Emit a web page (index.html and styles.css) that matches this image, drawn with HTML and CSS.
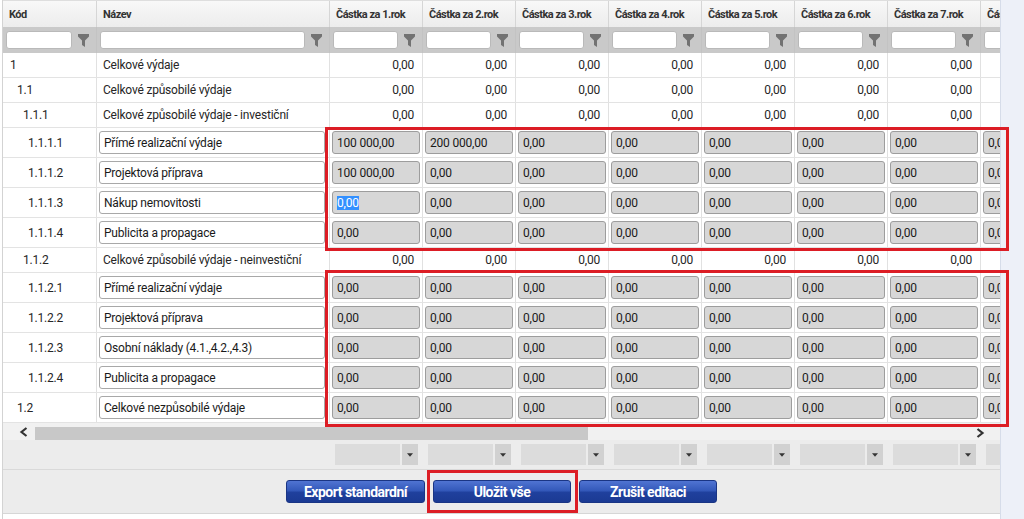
FILE: index.html
```html
<!DOCTYPE html>
<html lang="cs">
<head>
<meta charset="utf-8">
<title>Rozpočet</title>
<link rel="stylesheet" href="styles.css">
</head>
<body>
<svg class="defs" width="0" height="0" aria-hidden="true">
  <defs>
    <symbol id="funnel" viewBox="0 0 11 13"><path d="M0 0H11V2.5L7 6.5V13L4 11V6.5L0 2.5Z"/></symbol>
    <symbol id="tri" viewBox="0 0 7 4"><path d="M0 0H7L3.5 4Z"/></symbol>
  </defs>
</svg>
<div class="page">
  <div class="main">
    <div class="viewport">
      <div class="row hdr">
        <div>Kód</div><div>Název</div>
        <div>Částka za 1.rok</div><div>Částka za 2.rok</div><div>Částka za 3.rok</div><div>Částka za 4.rok</div>
        <div>Částka za 5.rok</div><div>Částka za 6.rok</div><div>Částka za 7.rok</div><div>Částka za 8.rok</div>
      </div>
      <div class="row flt">
        <div><span class="fin"></span><svg class="funnel"><use href="#funnel"/></svg></div>
        <div><span class="fin"></span><svg class="funnel"><use href="#funnel"/></svg></div>
        <div><span class="fin"></span><svg class="funnel"><use href="#funnel"/></svg></div>
        <div><span class="fin"></span><svg class="funnel"><use href="#funnel"/></svg></div>
        <div><span class="fin"></span><svg class="funnel"><use href="#funnel"/></svg></div>
        <div><span class="fin"></span><svg class="funnel"><use href="#funnel"/></svg></div>
        <div><span class="fin"></span><svg class="funnel"><use href="#funnel"/></svg></div>
        <div><span class="fin"></span><svg class="funnel"><use href="#funnel"/></svg></div>
        <div><span class="fin"></span><svg class="funnel"><use href="#funnel"/></svg></div>
        <div><span class="fin"></span><svg class="funnel"><use href="#funnel"/></svg></div>
      </div>

      <div class="row plain">
        <div class="kod l0">1</div><div class="name">Celkové výdaje</div>
        <div class="num">0,00</div><div class="num">0,00</div><div class="num">0,00</div><div class="num">0,00</div>
        <div class="num">0,00</div><div class="num">0,00</div><div class="num">0,00</div><div class="num"></div>
      </div>
      <div class="row plain">
        <div class="kod l1">1.1</div><div class="name">Celkové způsobilé výdaje</div>
        <div class="num">0,00</div><div class="num">0,00</div><div class="num">0,00</div><div class="num">0,00</div>
        <div class="num">0,00</div><div class="num">0,00</div><div class="num">0,00</div><div class="num"></div>
      </div>
      <div class="row plain">
        <div class="kod l2">1.1.1</div><div class="name">Celkové způsobilé výdaje - investiční</div>
        <div class="num">0,00</div><div class="num">0,00</div><div class="num">0,00</div><div class="num">0,00</div>
        <div class="num">0,00</div><div class="num">0,00</div><div class="num">0,00</div><div class="num"></div>
      </div>

      <div class="row edit">
        <div class="kod l3">1.1.1.1</div><div><span class="inp txt">Přímé realizační výdaje</span></div>
        <div><span class="inp">100 000,00</span></div><div><span class="inp">200 000,00</span></div><div><span class="inp">0,00</span></div><div><span class="inp">0,00</span></div>
        <div><span class="inp">0,00</span></div><div><span class="inp">0,00</span></div><div><span class="inp">0,00</span></div><div><span class="inp">0,00</span></div>
      </div>
      <div class="row edit">
        <div class="kod l3">1.1.1.2</div><div><span class="inp txt">Projektová příprava</span></div>
        <div><span class="inp">100 000,00</span></div><div><span class="inp">0,00</span></div><div><span class="inp">0,00</span></div><div><span class="inp">0,00</span></div>
        <div><span class="inp">0,00</span></div><div><span class="inp">0,00</span></div><div><span class="inp">0,00</span></div><div><span class="inp">0,00</span></div>
      </div>
      <div class="row edit">
        <div class="kod l3">1.1.1.3</div><div><span class="inp txt">Nákup nemovitosti</span></div>
        <div><span class="inp"><span class="sel">0,00</span></span></div><div><span class="inp">0,00</span></div><div><span class="inp">0,00</span></div><div><span class="inp">0,00</span></div>
        <div><span class="inp">0,00</span></div><div><span class="inp">0,00</span></div><div><span class="inp">0,00</span></div><div><span class="inp">0,00</span></div>
      </div>
      <div class="row edit">
        <div class="kod l3">1.1.1.4</div><div><span class="inp txt">Publicita a propagace</span></div>
        <div><span class="inp">0,00</span></div><div><span class="inp">0,00</span></div><div><span class="inp">0,00</span></div><div><span class="inp">0,00</span></div>
        <div><span class="inp">0,00</span></div><div><span class="inp">0,00</span></div><div><span class="inp">0,00</span></div><div><span class="inp">0,00</span></div>
      </div>

      <div class="row plain">
        <div class="kod l2">1.1.2</div><div class="name">Celkové způsobilé výdaje - neinvestiční</div>
        <div class="num">0,00</div><div class="num">0,00</div><div class="num">0,00</div><div class="num">0,00</div>
        <div class="num">0,00</div><div class="num">0,00</div><div class="num">0,00</div><div class="num"></div>
      </div>

      <div class="row edit">
        <div class="kod l3">1.1.2.1</div><div><span class="inp txt">Přímé realizační výdaje</span></div>
        <div><span class="inp">0,00</span></div><div><span class="inp">0,00</span></div><div><span class="inp">0,00</span></div><div><span class="inp">0,00</span></div>
        <div><span class="inp">0,00</span></div><div><span class="inp">0,00</span></div><div><span class="inp">0,00</span></div><div><span class="inp">0,00</span></div>
      </div>
      <div class="row edit">
        <div class="kod l3">1.1.2.2</div><div><span class="inp txt">Projektová příprava</span></div>
        <div><span class="inp">0,00</span></div><div><span class="inp">0,00</span></div><div><span class="inp">0,00</span></div><div><span class="inp">0,00</span></div>
        <div><span class="inp">0,00</span></div><div><span class="inp">0,00</span></div><div><span class="inp">0,00</span></div><div><span class="inp">0,00</span></div>
      </div>
      <div class="row edit">
        <div class="kod l3">1.1.2.3</div><div><span class="inp txt">Osobní náklady (4.1.,4.2.,4.3)</span></div>
        <div><span class="inp">0,00</span></div><div><span class="inp">0,00</span></div><div><span class="inp">0,00</span></div><div><span class="inp">0,00</span></div>
        <div><span class="inp">0,00</span></div><div><span class="inp">0,00</span></div><div><span class="inp">0,00</span></div><div><span class="inp">0,00</span></div>
      </div>
      <div class="row edit">
        <div class="kod l3">1.1.2.4</div><div><span class="inp txt">Publicita a propagace</span></div>
        <div><span class="inp">0,00</span></div><div><span class="inp">0,00</span></div><div><span class="inp">0,00</span></div><div><span class="inp">0,00</span></div>
        <div><span class="inp">0,00</span></div><div><span class="inp">0,00</span></div><div><span class="inp">0,00</span></div><div><span class="inp">0,00</span></div>
      </div>
      <div class="row edit">
        <div class="kod l1">1.2</div><div><span class="inp txt">Celkové nezpůsobilé výdaje</span></div>
        <div><span class="inp">0,00</span></div><div><span class="inp">0,00</span></div><div><span class="inp">0,00</span></div><div><span class="inp">0,00</span></div>
        <div><span class="inp">0,00</span></div><div><span class="inp">0,00</span></div><div><span class="inp">0,00</span></div><div><span class="inp">0,00</span></div>
      </div>
    </div>

    <div class="hscroll">
      <svg class="chev" viewBox="0 0 10 10"><polyline points="7.5,1 2.5,5 7.5,9"/></svg>
      <span class="thumb"></span>
      <svg class="chev right" viewBox="0 0 10 10"><polyline points="2.5,1 7.5,5 2.5,9"/></svg>
    </div>

    <div class="viewport">
      <div class="row ddrow">
        <div></div><div></div>
        <div><span class="ddbox"></span><span class="ddbtn"><svg><use href="#tri"/></svg></span></div>
        <div><span class="ddbox"></span><span class="ddbtn"><svg><use href="#tri"/></svg></span></div>
        <div><span class="ddbox"></span><span class="ddbtn"><svg><use href="#tri"/></svg></span></div>
        <div><span class="ddbox"></span><span class="ddbtn"><svg><use href="#tri"/></svg></span></div>
        <div><span class="ddbox"></span><span class="ddbtn"><svg><use href="#tri"/></svg></span></div>
        <div><span class="ddbox"></span><span class="ddbtn"><svg><use href="#tri"/></svg></span></div>
        <div><span class="ddbox"></span><span class="ddbtn"><svg><use href="#tri"/></svg></span></div>
        <div><span class="ddbox"></span><span class="ddbtn"><svg><use href="#tri"/></svg></span></div>
      </div>
    </div>

    <div class="actions">
      <button class="btn wide">Export standardní</button>
      <button class="btn">Uložit vše</button>
      <button class="btn">Zrušit editaci</button>
    </div>
    <div class="bottom"></div>
  </div>
  <div class="side"></div>

  <div class="hl hl1"></div>
  <div class="hl hl2"></div>
  <div class="hl hl3"></div>
</div>
</body>
</html>
```

FILE: styles.css
```css
* { box-sizing: border-box; }
html, body { margin: 0; padding: 0; }
body {
  width: 1024px;
  height: 519px;
  overflow: hidden;
  background: #fff;
  font-family: Roboto, "Liberation Sans", Arial, sans-serif;
  font-size: 12px;
  letter-spacing: -0.2px;
  color: #262626;
}
.defs { position: absolute; width: 0; height: 0; }

.page { position: relative; display: flex; height: 519px; }
.main {
  margin-left: 2px;
  width: 998px;
  border-left: 1px solid #d3d3d3;
  display: flex;
  flex-direction: column;
}
.side { flex: 1; background: #edf0f8; border-left: 1px solid #d6dce9; }

.viewport { width: 997px; overflow: hidden; flex: none; }
.row {
  display: grid;
  grid-template-columns: 94px 233px repeat(8, 93px);
  width: 1071px;
}
.row > div {
  display: flex;
  align-items: center;
  min-width: 0;
  overflow: hidden;
  white-space: nowrap;
  border-right: 1px solid #e1e1e1;
}

/* header */
.hdr { height: 27px; background: linear-gradient(#f8f8f8, #ececec); border-top: 1px solid #dedede; }
.hdr > div {
  padding-left: 6px;
  font-weight: 700;
  font-size: 11px;
  letter-spacing: -0.5px;
  color: #333;
  border-right-color: #d6d6d6;
}

/* filter row */
.flt { height: 26px; background: #c9c9c9; }
.flt > div { padding: 0 7px 0 3px; gap: 6px; border-right-color: #c3c3c3; }
.fin {
  flex: 1;
  height: 18px;
  background: #fff;
  border: 1px solid #b9b9b9;
  border-radius: 3px;
}
.funnel { flex: none; width: 11px; height: 13px; fill: #727272; }

/* data rows */
.plain { height: 25px; border-bottom: 1px solid #e3e3e3; }
.edit { height: 30px; border-bottom: 1px solid #e3e3e3; }
.edit > div { padding-left: 2px; }
.num { justify-content: flex-end; padding-right: 8px; }
.name { padding-left: 6px; }
.kod.l0 { padding-left: 7px; }
.kod.l1 { padding-left: 14px; }
.kod.l2 { padding-left: 20px; }
.kod.l3 { padding-left: 25px; }

.inp {
  flex: none;
  display: flex;
  align-items: center;
  width: 88px;
  height: 23px;
  padding-left: 4px;
  background: #d7d7d7;
  border: 1px solid #9d9d9d;
  border-radius: 3px;
  color: #1a1a1a;
  overflow: hidden;
}
.inp.txt { width: 226px; background: #fff; border-color: #a8a8a8; }
.sel { background: #3390ff; color: #fff; }

/* horizontal scrollbar */
.hscroll {
  flex: none;
  height: 17px;
  display: flex;
  align-items: center;
  background: #f1f1f1;
}
.chev { width: 10px; height: 10px; margin-left: 16px; fill: none; stroke: #333; stroke-width: 2.2; }
.chev.right { margin-left: auto; margin-right: 15px; align-self: flex-start; margin-top: 5px; }
.thumb { width: 553px; height: 13px; margin-left: 6px; align-self: flex-end; background: #c8c8c8; }

/* dropdown footer row */
.ddrow { height: 30px; background: #ececec; border-bottom: 1px solid #d9d9d9; }
.ddrow > div { border-right: none; padding-left: 5px; gap: 2px; }
.ddbox { width: 65px; height: 21px; background: #dcdcdc; }
.ddbtn {
  width: 16px;
  height: 21px;
  background: #d1d1d1;
  display: flex;
  align-items: center;
  justify-content: center;
}
.ddbtn svg { width: 6px; height: 4px; fill: #333; }

/* buttons */
.actions {
  flex: none;
  height: 44px;
  display: flex;
  align-items: center;
  justify-content: center;
  gap: 8px;
  background: #ececec;
  border-bottom: 1px solid #d6d6d6;
}
.btn {
  width: 138px;
  height: 23px;
  padding: 0;
  border: 1px solid #1a3584;
  border-radius: 3px;
  background: linear-gradient(#5074d2 0%, #3459ba 45%, #1f409d 55%, #1b3a93 100%);
  color: #fff;
  font-family: Roboto, "Liberation Sans", Arial, sans-serif;
  font-weight: 700;
  font-size: 14px;
  letter-spacing: -0.5px;
}
.btn.wide { width: 139px; }
.bottom { flex: 1; background: #fff; }

/* red highlight overlays */
.hl { position: absolute; border: 3px solid #dc1d25; pointer-events: none; }
.hl1 { left: 325px; top: 127px; width: 684px; height: 124px; }
.hl2 { left: 325px; top: 270px; width: 684px; height: 157px; }
.hl3 { left: 427px; top: 470px; width: 151px; height: 43px; }
```
